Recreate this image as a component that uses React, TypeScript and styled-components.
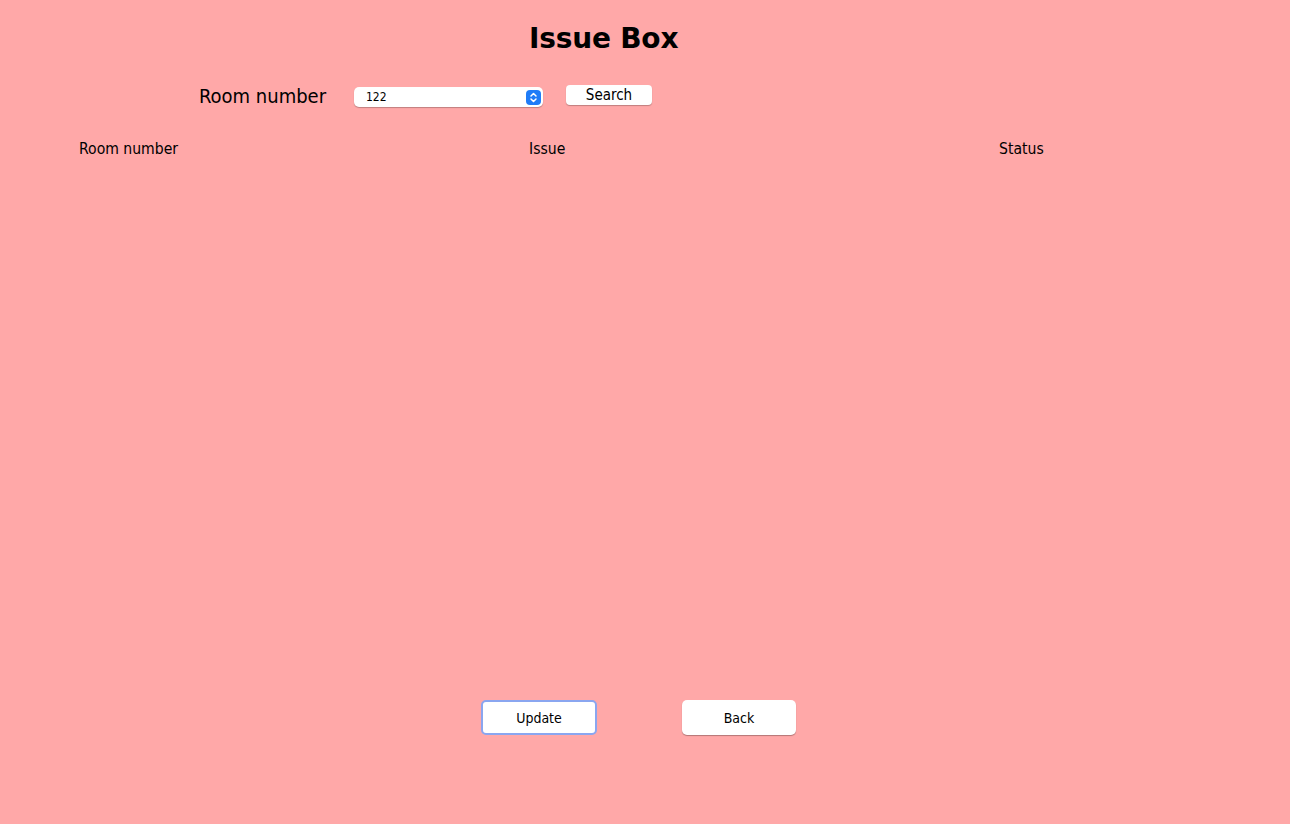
import React from "react";
import styled, { createGlobalStyle } from "styled-components";

const Global = createGlobalStyle`
  html, body { margin: 0; padding: 0; background: #ffa8a8; }
  body { font-family: "DejaVu Sans Condensed", "DejaVu Sans", sans-serif; color: #000; }
`;

const Page = styled.div`
  width: 1290px;
  height: 824px;
  background: #ffa8a8;
  display: flex;
  flex-direction: column;
`;

const Title = styled.h1`
  margin: 19px 0 0 0;
  padding-left: 529px;
  font-family: "DejaVu Sans", sans-serif;
  font-weight: bold;
  font-size: 28px;
  line-height: 40px;
  letter-spacing: -0.2px;
`;

const SearchRow = styled.div`
  display: flex;
  align-items: center;
  padding-left: 199px;
  margin-top: 20px;
  height: 34px;
`;

const Label = styled.span`
  font-size: 20px;
  width: 155px;
`;

const SelectBox = styled.div`
  width: 189px;
  height: 20px;
  box-sizing: border-box;
  background: #fff;
  border-radius: 5px;
  box-shadow: 0 1px 1px rgba(0,0,0,0.25);
  display: flex;
  align-items: center;
  justify-content: space-between;
  padding: 0 2px 0 12px;
  font-size: 12px;
  margin-top: 2px;
`;

const Stepper = styled.span`
  width: 15px;
  height: 15px;
  border-radius: 4px;
  background: #1f7cf7;
  display: flex;
  align-items: center;
  justify-content: center;
`;

const SmallButton = styled.button`
  margin-left: 23px;
  width: 86px;
  height: 20px;
  margin-top: -3px;
  background: #fff;
  border: none;
  border-radius: 4px;
  box-shadow: 0 1px 1px rgba(0,0,0,0.25);
  font-family: inherit;
  font-size: 15px;
  padding: 0;
  color: #000;
`;

const HeaderRow = styled.div`
  display: grid;
  grid-template-columns: 450px 470px 1fr;
  padding-left: 79px;
  margin-top: 26px;
  font-size: 15.6px;
  line-height: 20px;
`;

const Spacer = styled.div`
  flex: 1;
`;

const ButtonRow = styled.div`
  display: flex;
  gap: 85px;
  padding-left: 481px;
  margin-bottom: 89px;
`;

const ActionButton = styled.button<{ $focused?: boolean }>`
  width: ${(p) => (p.$focused ? "116px" : "114px")};
  height: 35px;
  box-sizing: border-box;
  background: #fff;
  border-radius: 5px;
  font-family: inherit;
  font-size: 14px;
  color: #000;
  padding: 0;
  border: ${(p) => (p.$focused ? "2px solid #8aa6f0" : "none")};
  box-shadow: ${(p) => (p.$focused ? "none" : "0 1px 1px rgba(0,0,0,0.3)")};
`;

export default function App() {
  return (
    <Page>
      <Global />
      <Title>Issue Box</Title>
      <SearchRow>
        <Label>Room number</Label>
        <SelectBox>
          <span>122</span>
          <Stepper>
            <svg width="9" height="11" viewBox="0 0 9 11" fill="none" stroke="#fff" strokeWidth="1.5" strokeLinecap="round" strokeLinejoin="round">
              <path d="M2 4 L4.5 1.5 L7 4" />
              <path d="M2 7 L4.5 9.5 L7 7" />
            </svg>
          </Stepper>
        </SelectBox>
        <SmallButton>Search</SmallButton>
      </SearchRow>
      <HeaderRow>
        <span>Room number</span>
        <span>Issue</span>
        <span>Status</span>
      </HeaderRow>
      <Spacer />
      <ButtonRow>
        <ActionButton $focused>Update</ActionButton>
        <ActionButton>Back</ActionButton>
      </ButtonRow>
    </Page>
  );
}
